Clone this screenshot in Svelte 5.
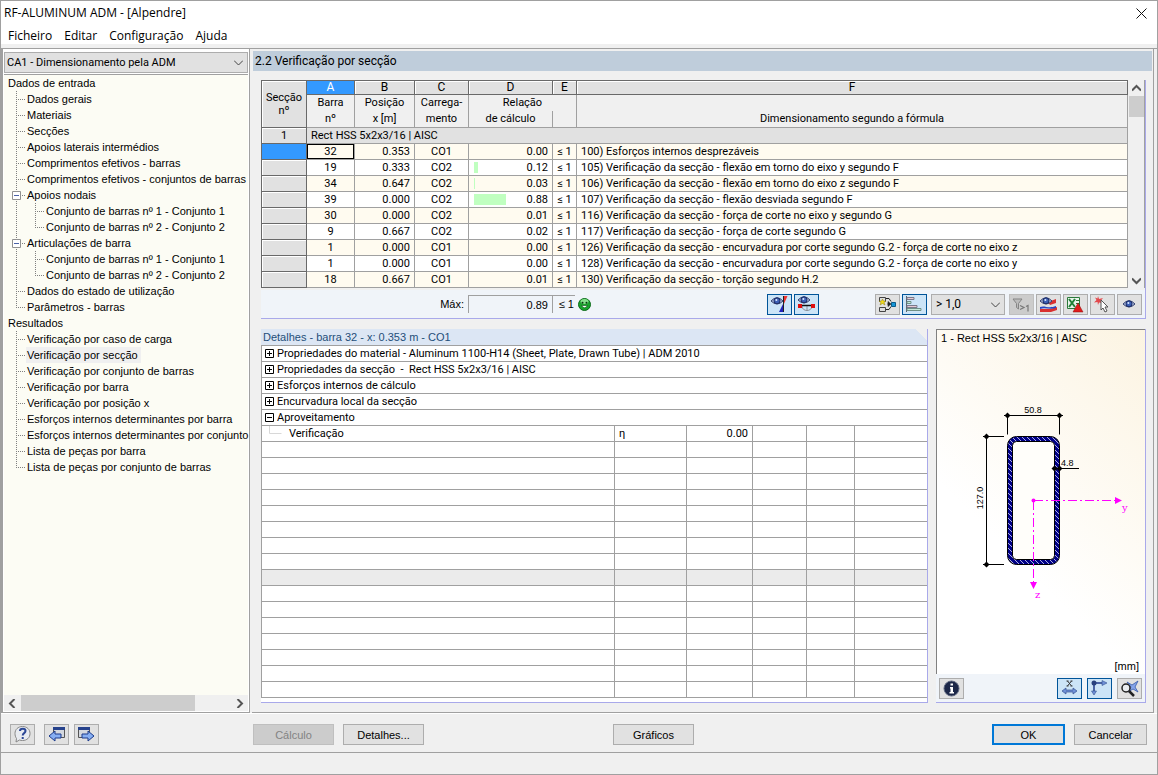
<script lang="ts">
  type TreeNode = { label: string; selected?: boolean; children?: TreeNode[] };

  const tree: TreeNode[] = [
    {
      label: 'Dados de entrada',
      children: [
        { label: 'Dados gerais' },
        { label: 'Materiais' },
        { label: 'Secções' },
        { label: 'Apoios laterais intermédios' },
        { label: 'Comprimentos efetivos - barras' },
        { label: 'Comprimentos efetivos - conjuntos de barras' },
        {
          label: 'Apoios nodais',
          children: [
            { label: 'Conjunto de barras nº 1 - Conjunto 1' },
            { label: 'Conjunto de barras nº 2 - Conjunto 2' }
          ]
        },
        {
          label: 'Articulações de barra',
          children: [
            { label: 'Conjunto de barras nº 1 - Conjunto 1' },
            { label: 'Conjunto de barras nº 2 - Conjunto 2' }
          ]
        },
        { label: 'Dados do estado de utilização' },
        { label: 'Parâmetros - barras' }
      ]
    },
    {
      label: 'Resultados',
      children: [
        { label: 'Verificação por caso de carga' },
        { label: 'Verificação por secção', selected: true },
        { label: 'Verificação por conjunto de barras' },
        { label: 'Verificação por barra' },
        { label: 'Verificação por posição x' },
        { label: 'Esforços internos determinantes por barra' },
        { label: 'Esforços internos determinantes por conjunto' },
        { label: 'Lista de peças por barra' },
        { label: 'Lista de peças por conjunto de barras' }
      ]
    }
  ];

  const rows = [
    { bar: '32', x: '0.353', load: 'CO1', ratio: '0.00', text: '100) Esforços internos desprezáveis' },
    { bar: '19', x: '0.333', load: 'CO2', ratio: '0.12', text: '105) Verificação da secção - flexão em torno do eixo y segundo F' },
    { bar: '34', x: '0.647', load: 'CO2', ratio: '0.03', text: '106) Verificação da secção - flexão em torno do eixo z segundo F' },
    { bar: '39', x: '0.000', load: 'CO2', ratio: '0.88', text: '107) Verificação da secção - flexão desviada segundo F' },
    { bar: '30', x: '0.000', load: 'CO2', ratio: '0.01', text: '116) Verificação da secção - força de corte no eixo y segundo G' },
    { bar: '9', x: '0.667', load: 'CO2', ratio: '0.02', text: '117) Verificação da secção - força de corte segundo G' },
    { bar: '1', x: '0.000', load: 'CO1', ratio: '0.00', text: '126) Verificação da secção - encurvadura por corte segundo G.2 - força de corte no eixo z' },
    { bar: '1', x: '0.000', load: 'CO1', ratio: '0.00', text: '128) Verificação da secção - encurvadura por corte segundo G.2 - força de corte no eixo y' },
    { bar: '18', x: '0.667', load: 'CO1', ratio: '0.01', text: '130) Verificação da secção - torção segundo H.2' }
  ];

  const groups = [
    { label: 'Propriedades do material - Aluminum 1100-H14 (Sheet, Plate, Drawn Tube) | ADM 2010', open: false },
    { label: 'Propriedades da secção \u00a0- \u00a0Rect HSS 5x2x3/16 | AISC', open: false },
    { label: 'Esforços internos de cálculo', open: false },
    { label: 'Encurvadura local da secção', open: false },
    { label: 'Aproveitamento', open: true }
  ];

  const emptyRows = Array.from({ length: 16 }, (_, i) => i);
  const BAR_MAX = 36;

  function barWidth(ratio: string) {
    const value = Number(ratio);
    return value < 0.025 ? 0 : Math.max(1, Math.round(value * BAR_MAX));
  }
</script>

{#snippet eye(x: number, y: number)}
  <g transform="translate({x} {y})">
    <path d="M0 4 Q6 -2.5 12 4 Q6 10 0 4Z" fill="#a9b8dc" stroke="#34406e" />
    <circle cx="6" cy="3.8" r="3" fill="#3c5fb5" stroke="#1c2c66" />
    <circle cx="5.4" cy="3" r="1" fill="#dce8ff" />
  </g>
{/snippet}

{#snippet icon(name: string)}
  <svg class="icon" width="23" height="19" viewBox="0 0 23 19" fill="none" aria-hidden="true">
    {#if name === 'diagram'}
      {@render eye(3, 2)}
      <path d="M15.500 1h4l-4 9z" fill="#ee3333" />
      <path d="M15 9v8h-4z" fill="#2222bb" />
      <path d="M15.500 1v16" stroke="#222" />
    {:else if name === 'member'}
      {@render eye(3, 1)}
      <path d="M7 11c0 6 10 6 10 0M12 11v5" stroke="#8a9099" />
      <path d="M4 10.500h15" stroke="#111" stroke-width="1.500" />
      <path d="M3 9h4v4H3zM16 9h4v4h-4z" fill="#e01010" />
    {:else if name === 'flow'}
      <path d="M3.500 2.500h6v4h-6zM3.500 12.500h6v4h-6z" fill="#ddd" stroke="#444" />
      <path d="M6.500 4l1 2h2.500l-2 1.500 1 2.500-2.500-1.500L4 10l1-2.500L3 6h2.500z" fill="#f2dc1c" stroke="#8b7a10" stroke-width=".5" />
      <path d="M10 3.500h3l2 3M10 14.500h3l2-3" stroke="#222" />
      <path d="M11 9h3M12 6.500l3 2.500-3 2.500z" fill="#222" stroke="#222" stroke-width=".6" />
      <path d="M15.500 7.500h4v4h-4z" fill="#1696d8" stroke="#0b5b8a" />
    {:else if name === 'bars'}
      <path d="M3.500 1v16" stroke="#59636f" />
      <path d="M4 2.500h7v2H4z" fill="#e6c9d2" stroke="#7a7a8a" />
      <path d="M4 6.500h4v2H4z" fill="#c5e8d8" stroke="#6f8f87" />
      <path d="M4 10.500h10v2H4z" fill="#e6c9d2" stroke="#7a7a8a" />
      <path d="M4 13.500h14v2H4z" fill="#c5e8d8" stroke="#6f8f87" />
    {:else if name === 'filter'}
      <path d="M3 4h9l-3.500 4.500V14l-2-1.500v-4z" fill="#bdbdbd" stroke="#858585" />
      <path d="M10 10.500l4 2-4 2M16 11.500l2-1v6" stroke="#777" stroke-width="1.200" />
    {:else if name === 'results'}
      <path d="M11 7l8-3v4l-6 2zM3 14h10l7-2v3l-6 2H3z" fill="#d93030" />
      <path d="M3 12c5-2 8 2 16-1v2c-7 2-11-1-16 1z" fill="#2444c4" />
      {@render eye(3, 2)}
    {:else if name === 'excel'}
      <path d="M3.500 2.500h12v11h-12z" fill="#e8f3ea" stroke="#2b7a3b" />
      <path d="M5 4l6 8M11 4l-6 8" stroke="#218038" stroke-width="2" />
      <path d="M12 5.500h3M12 8.500h3" stroke="#2b7a3b" />
      <path d="M14 8l5 9h-10z" fill="#e01c1c" stroke="#8c0d0d" stroke-width=".5" />
    {:else if name === 'pick'}
      <path d="M7 1l1 3 4-1-2.500 3 2.500 2-4-.5L7 10 6.500 7 3 7.500 5.500 5 4 2.500l2.500 1z" fill="#e2484c" />
      <path d="M10 5l7 7h-3l2 4-2 1-2-4-2 2z" fill="#fff" stroke="#555" />
    {:else if name === 'view'}
      {@render eye(5, 5)}
    {:else if name === 'info'}
      <circle cx="11.500" cy="9.500" r="7.500" fill="#1c2748" stroke="#5f6880" />
      <path d="M10 8h3v5h1v1.500H9.500V13h1V9.500H10zM10.500 4.500h2.500v2h-2.500z" fill="#fff" />
    {:else if name === 'dimx'}
      <path d="M9.500 2l4 5M13.500 2l-4 5M8.500 2h2M12.500 2h2M8.500 7h2M12.500 7h2" stroke="#333" />
      <path d="M4 12l4-3v2h7V9l4 3-4 3v-2H8v2z" fill="#6f90d8" stroke="#34508f" stroke-width=".7" />
    {:else if name === 'axes'}
      <path d="M6 4h10M6 4v10" stroke="#4a64a6" stroke-width="2" />
      <path d="M14 1.500l5 2.500-5 2.500zM3.500 12l2.500 4 2.500-4z" fill="#6f90d8" stroke="#34508f" stroke-width=".6" />
      <circle cx="6" cy="4" r="2.500" fill="#27407e" />
    {:else if name === 'zoomx'}
      <path d="M9 3l5 3 6-4-3 6 3 5-5-3-5 3 3-5z" fill="#86a5ea" stroke="#3659a8" stroke-width=".8" />
      <circle cx="8" cy="9" r="4" fill="#eef2f6" fill-opacity=".7" stroke="#222" stroke-width="1.500" />
      <path d="M11 12l5 5" stroke="#222" stroke-width="2.500" />
    {:else if name === 'help'}
      <path d="M11.500 1.500c4.500 0 7.500 3 7.500 7s-3 7-7.500 7c-1 0-2-.2-3-.5L5 17l.5-3.500C4.500 12 4 10.500 4 8.500c0-4 3-7 7.500-7z" fill="#e8ebf0" stroke="#888" />
      <path d="M9 6c0-3 5.500-3 5.500 0 0 2.200-2.800 2-2.800 4.500M11.700 12v2" stroke="#2b4796" stroke-width="2" />
    {:else if name === 'previous'}
      <path d="M8.500 2.500h11v10h-11z" fill="#d4d8df" stroke="#555" />
      <path d="M8 2h12v3H8z" fill="#26428c" />
      <path d="M4 11l6-5v3h6v4h-6v3z" fill="#86aef2" stroke="#1c3a8c" />
    {:else if name === 'next'}
      <path d="M3.500 2.500h11v10h-11z" fill="#d4d8df" stroke="#555" />
      <path d="M3 2h12v3H3z" fill="#26428c" />
      <path d="M19 11l-6-5v3H7v4h6v3z" fill="#86aef2" stroke="#1c3a8c" />
    {/if}
  </svg>
{/snippet}

{#snippet tool(name: string, label: string, state: string = '')}
  <button class="tool {state}" type="button" aria-label={label} disabled={state === 'off'}>
    {@render icon(name)}
  </button>
{/snippet}

{#snippet chevron(dir: string)}
  <svg class="chevron {dir}" width="9" height="9" viewBox="0 0 9 9" fill="none" aria-hidden="true">
    <path d="M0 2.500l4.500 4.500L9 2.500" stroke="currentColor" />
  </svg>
{/snippet}

{#snippet guide(kind: string)}
  <svg class="guide" width="19" height="16" viewBox="0 0 19 16" fill="none" aria-hidden="true">
    <path d={kind === 'last' ? 'M9.500 0v9' : 'M9.500 0v16'} stroke="#808080" stroke-dasharray="1 1" />
    {#if kind !== 'pass'}
      <path d="M9 8.500h9" stroke="#808080" stroke-dasharray="1 1" />
    {/if}
    {#if kind === 'toggle'}
      <path d="M5.500 4.500h8v8h-8z" fill="#fff" stroke="#919191" />
      <path d="M7 8.500h5" stroke="#4b63a7" />
    {/if}
  </svg>
{/snippet}

<div class="window">
  <header>
    <div class="titlebar">
      <h1>RF-ALUMINUM ADM - [Alpendre]</h1>
      <button class="close" type="button" aria-label="Fechar">
        <svg width="11" height="11" viewBox="0 0 11 11" aria-hidden="true">
          <path d="M.5.5l10 10M10.500.5l-10 10" stroke="#111" />
        </svg>
      </button>
    </div>
    <nav class="menu">
      <button type="button">Ficheiro</button>
      <button type="button">Editar</button>
      <button type="button">Configuração</button>
      <button type="button">Ajuda</button>
    </nav>
  </header>

  <main>
    <aside>
      <div class="combo case">
        <select aria-label="Caso">
          <option>CA1 - Dimensionamento pela ADM</option>
        </select>
        {@render chevron('down')}
      </div>
      <ul class="tree">
        {#each tree as root}
          <li>
            <a class="row root" href="#tree">{root.label}</a>
            <ul>
              {#each root.children ?? [] as node, i}
                {@const last = i === (root.children?.length ?? 0) - 1}
                <li>
                  <a class="row" href="#tree">
                    {@render guide(node.children ? 'toggle' : last ? 'last' : 'mid')}
                    <span class:selected={node.selected}>{node.label}</span>
                  </a>
                  {#if node.children}
                    <ul>
                      {#each node.children as child, j}
                        <li>
                          <a class="row" href="#tree">
                            {@render guide('pass')}
                            {@render guide(j === node.children.length - 1 ? 'last' : 'mid')}
                            <span>{child.label}</span>
                          </a>
                        </li>
                      {/each}
                    </ul>
                  {/if}
                </li>
              {/each}
            </ul>
          </li>
        {/each}
      </ul>
      <div class="hscroll">
        <button type="button" aria-label="Esquerda">{@render chevron('left')}</button>
        <div class="track"><div class="thumb"></div></div>
        <button type="button" aria-label="Direita">{@render chevron('right')}</button>
      </div>
    </aside>

    <section class="content">
      <h2>2.2 Verificação por secção</h2>

      <div class="panel results">
        <div class="grid-wrap">
          <table class="grid">
            <colgroup>
              <col class="c-section" /><col class="c-a" /><col class="c-b" /><col class="c-c" />
              <col class="c-d" /><col class="c-e" /><col />
            </colgroup>
            <thead>
              <tr class="letters">
                <th class="corner" rowspan="3">Secção<br />nº</th>
                <th class="active">A</th>
                <th>B</th>
                <th>C</th>
                <th>D</th>
                <th>E</th>
                <th>F</th>
              </tr>
              <tr class="names">
                <th>Barra</th>
                <th>Posição</th>
                <th>Carrega-</th>
                <th colspan="2">Relação</th>
                <th></th>
              </tr>
              <tr class="names bottom">
                <th>nº</th>
                <th>x [m]</th>
                <th>mento</th>
                <th>de cálculo</th>
                <th></th>
                <th>Dimensionamento segundo a fórmula</th>
              </tr>
            </thead>
            <tbody>
              <tr class="section">
                <th scope="row">1</th>
                <td colspan="6">Rect HSS 5x2x3/16 | AISC</td>
              </tr>
              {#each rows as row, i}
                <tr class:tinted={i % 2 === 0}>
                  <th scope="row" class:active={i === 0} aria-label="Linha {i + 1}"></th>
                  <td class="center" class:focus={i === 0}>{row.bar}</td>
                  <td class="number">{row.x}</td>
                  <td class="center">{row.load}</td>
                  <td class="ratio">
                    <div>
                      <span class="bar" style="width: {barWidth(row.ratio)}px"></span>
                      {row.ratio}
                    </div>
                  </td>
                  <td class="limit">≤ 1</td>
                  <td class="text">{row.text}</td>
                </tr>
              {/each}
            </tbody>
          </table>
          <div class="vscroll">
            <button type="button" aria-label="Acima">{@render chevron('up')}</button>
            <div class="track"><div class="thumb"></div></div>
            <button type="button" aria-label="Abaixo">{@render chevron('down')}</button>
          </div>
        </div>

        <div class="toolbar">
          <label for="max-ratio">Máx:</label>
          <input id="max-ratio" class="max" value="0.89" readonly />
          <span class="max-limit">≤ 1</span>
          <svg width="13" height="13" viewBox="0 0 13 13" role="img" aria-label="Cumprido">
            <circle cx="6.500" cy="6.500" r="6" fill="#17a32a" stroke="#0a6a18" />
            <ellipse cx="6.500" cy="3.500" rx="4" ry="2.500" fill="#86e08c" />
            <path d="M3.500 7.500q3 4.500 6 0z" fill="#fff" stroke="#064d10" stroke-width=".6" />
            <circle cx="4.500" cy="4.800" r="1" fill="#053a0c" />
            <circle cx="8.500" cy="4.800" r="1" fill="#053a0c" />
          </svg>
          <div class="tools first">
            {@render tool('diagram', 'Diagramas', 'on')}
            {@render tool('member', 'Barra no modelo', 'on')}
          </div>
          <div class="tools">
            {@render tool('flow', 'Casos determinantes')}
            {@render tool('bars', 'Barras de relação', 'on')}
          </div>
          <div class="combo filter">
            <select aria-label="Filtro">
              <option>&gt; 1,0</option>
            </select>
            {@render chevron('down')}
          </div>
          <div class="tools">
            {@render tool('filter', 'Filtrar maiores que 1', 'off')}
            {@render tool('results', 'Resultados')}
            {@render tool('excel', 'Exportar')}
            {@render tool('pick', 'Selecionar')}
            {@render tool('view', 'Ver')}
          </div>
        </div>
      </div>

      <div class="lower">
        <div class="panel details">
          <h3>Detalhes - barra 32 - x: 0.353 m - CO1</h3>
          <table class="detail-grid">
            <colgroup>
              <col /><col class="d-symbol" /><col class="d-value" /><col class="d-unit" />
              <col class="d-small" /><col class="d-last" />
            </colgroup>
            <tbody>
              {#each groups as group}
                <tr>
                  <td class="group" colspan="6">
                    <div>
                      <button type="button" aria-label="Expandir" aria-expanded={group.open}>
                        <svg width="9" height="9" viewBox="0 0 9 9" aria-hidden="true">
                          <path d="M.5.5h8v8h-8zM2 4.500h5" fill="none" stroke="#000" />
                          {#if !group.open}
                            <path d="M4.500 2v5" stroke="#000" />
                          {/if}
                        </svg>
                      </button>
                      {group.label}
                    </div>
                  </td>
                </tr>
              {/each}
              <tr>
                <td class="group">
                  <div>
                    <svg width="21" height="15" viewBox="0 0 21 15" fill="none" aria-hidden="true">
                      <path d="M4.500 0v7.500h12" stroke="#d8d8d8" />
                    </svg>
                    Verificação
                  </div>
                </td>
                <td class="symbol">η</td>
                <td class="number">0.00</td>
                <td></td>
                <td></td>
                <td></td>
              </tr>
              {#each emptyRows as i}
                <tr class:shaded={i === 8}>
                  <td></td>
                  <td></td>
                  <td></td>
                  <td></td>
                  <td></td>
                  <td></td>
                </tr>
              {/each}
            </tbody>
          </table>
        </div>

        <div class="panel drawing">
          <div class="canvas">
            <h3>1 - Rect HSS 5x2x3/16 | AISC</h3>
            <svg width="208" height="240" viewBox="0 0 208 240" fill="none" role="img" aria-label="Secção">
              <defs>
                <pattern id="hatch" width="5" height="5" patternUnits="userSpaceOnUse">
                  <rect width="5" height="5" fill="#000087" />
                  <path d="M-1 -1l7 7M-1 4l2 2M4 -1l2 2" stroke="#c0c0ea" stroke-width=".9" />
                </pattern>
              </defs>
              <rect x="70.500" y="54.500" width="52" height="128" rx="9" fill="url(#hatch)" stroke="#000" />
              <rect x="75.500" y="59.500" width="42" height="118" rx="4" fill="#fffefa" stroke="#000" />
              <g stroke="#000">
                <path d="M67 33.500h59M70.500 33.500v19M122.500 33.500v19" />
                <path d="M49.500 52v133M46 54.500h21M46 182.500h21" />
                <path d="M115 86.500h27" />
              </g>
              <g fill="#000">
                <path d="M67.500 33.500l3-3 3 3-3 3zM119.500 33.500l3-3 3 3-3 3z" />
                <path d="M46.500 54.500l3-3 3 3-3 3zM46.500 182.500l3-3 3 3-3 3z" />
                <path d="M114.500 86.500l3-3 3 3-3 3zM119.500 86.500l3-3 3 3-3 3z" />
              </g>
              <g class="dims">
                <text x="96" y="31" text-anchor="middle">50.8</text>
                <text x="124" y="84">4.8</text>
                <text x="46" y="116" text-anchor="middle" transform="rotate(-90 46 116)">127.0</text>
              </g>
              <path d="M97 118.500h83M96.500 119v81" stroke="#f0f" stroke-dasharray="9 3 2 3" />
              <path d="M178 115l7 3.500-7 3.500zM93 200l3.500 7 3.500-7z" fill="#f0f" />
              <circle cx="96.500" cy="118.500" r="2" fill="#f0f" />
              <g class="axis">
                <text x="185" y="129">y</text>
                <text x="98" y="216">z</text>
              </g>
            </svg>
            <span class="unit">[mm]</span>
          </div>
          <div class="toolbar">
            {@render tool('info', 'Informação')}
            <div class="tools spaced">
              {@render tool('dimx', 'Dimensões', 'on')}
              {@render tool('axes', 'Eixos', 'on')}
              {@render tool('zoomx', 'Ver tudo')}
            </div>
          </div>
        </div>
      </div>
    </section>
  </main>

  <footer>
    {@render tool('help', 'Ajuda')}
    <div class="tools spaced pages">
      {@render tool('previous', 'Anterior')}
      {@render tool('next', 'Seguinte')}
    </div>
    <div class="actions">
      <button class="action" type="button" disabled>Cálculo</button>
      <button class="action" type="button">Detalhes...</button>
      <button class="action graphics" type="button">Gráficos</button>
      <button class="action short default" type="button">OK</button>
      <button class="action short" type="button">Cancelar</button>
    </div>
  </footer>
  <div class="status"></div>
</div>

<style>
  :global(body) {
    margin: 0;
    background: #fff;
  }

  * {
    box-sizing: border-box;
  }

  .window {
    display: flex;
    flex-direction: column;
    min-height: 100vh;
    border: 1px solid #a0a0a0;
    background: #f0f0f0;
    color: #000;
    font-family: 'Liberation Sans', Arial, sans-serif;
    font-size: 11px;
    line-height: 16px;
  }

  button,
  input,
  select {
    margin: 0;
    padding: 0;
    border: 0;
    background: none;
    color: inherit;
    font: inherit;
  }

  h1,
  h2,
  h3 {
    margin: 0;
    font-weight: 400;
  }

  ul {
    margin: 0;
    padding: 0;
    list-style: none;
  }

  svg {
    display: block;
    flex: none;
  }

  /* title and menu */
  header {
    padding-bottom: 4px;
    border-bottom: 1px solid #a0a0a0;
    background: linear-gradient(#fff, #fff) no-repeat 0 0 / 100% 43px;
    font-family: 'Open Sans', 'Noto Sans', sans-serif;
    font-size: 12px;
  }

  .titlebar {
    display: flex;
    align-items: center;
    justify-content: space-between;
    height: 24px;
    padding: 0 10px 0 3px;
  }

  h1 {
    font-size: 12px;
  }

  .menu {
    display: flex;
    gap: 12px;
    height: 19px;
    padding-left: 7px;
  }

  .menu button {
    height: 22px;
  }

  main {
    display: flex;
    flex: 1;
  }

  /* navigation */
  aside {
    display: flex;
    flex-direction: column;
    width: 249px;
    padding: 3px 1px 1px;
    border: solid #a0a0a0;
    border-width: 0 1px 1px 2px;
    background: #fff;
  }

  .combo {
    display: grid;
    align-items: center;
    border: 1px solid #adadad;
    background: #e1e1e1;
    color: #444;
    font-family: Roboto, 'Liberation Sans', sans-serif;
  }

  .combo select {
    grid-area: 1 / 1;
    width: 100%;
    height: 100%;
    appearance: none;
    color: #000;
  }

  .combo .chevron {
    grid-area: 1 / 1;
    justify-self: end;
    margin-right: 4px;
    pointer-events: none;
  }

  .case {
    height: 21px;
  }

  .case select {
    padding-left: 2px;
  }

  .tree {
    flex: 1;
    margin-top: 1px;
    border-top: 1px solid #a0a0a0;
    background: #fcfcf4;
  }

  .row {
    display: flex;
    height: 16px;
    padding-left: 3px;
    color: #000;
    text-decoration: none;
    white-space: nowrap;
  }

  .row span {
    padding: 0 3px 0 1px;
  }

  .row .selected {
    background: #f0f0f0;
  }

  .root {
    padding-left: 4px;
  }

  .chevron.up {
    transform: rotate(180deg);
  }

  .chevron.left {
    transform: rotate(90deg);
  }

  .chevron.right {
    transform: rotate(-90deg);
  }

  .hscroll,
  .vscroll {
    display: flex;
    background: #f0f0f0;
    color: #555;
  }

  .hscroll button,
  .vscroll button {
    display: grid;
    place-items: center;
    width: 17px;
    height: 16px;
  }

  .hscroll path,
  .vscroll path {
    stroke-width: 2;
  }

  .track {
    flex: 1;
  }

  .thumb {
    background: #cdcdcd;
  }

  .hscroll .thumb {
    width: 83%;
    height: 16px;
  }

  /* results */
  .content {
    display: flex;
    flex: 1;
    flex-direction: column;
    min-width: 0;
    margin: 0 3px 0 2px;
    padding: 2px 1px 9px 1px;
    border: solid #a0a0a0;
    border-width: 0 1px 1px 0;
  }

  h2 {
    height: 20px;
    padding-left: 2px;
    background: #bfcddb;
    font-family: Roboto, 'Liberation Sans', sans-serif;
    font-size: 12px;
    line-height: 20px;
  }

  .panel {
    border-right: 1px solid #a9a9ea;
    border-bottom: 1px solid #a9a9ea;
  }

  .results {
    margin: 9px 6px 0 8px;
  }

  .grid-wrap {
    display: flex;
  }

  table {
    width: 100%;
    border-spacing: 0;
    table-layout: fixed;
    font-family: Roboto, 'Liberation Sans', sans-serif;
    line-height: 15px;
  }

  th,
  td {
    height: 16px;
    padding: 0;
    border: solid #a0a0a0;
    border-width: 0 1px 1px 0;
    font-weight: 400;
    white-space: nowrap;
    overflow: hidden;
  }

  .grid {
    flex: 1;
    width: 0;
    border: solid #696969;
    border-width: 1px 0 0 1px;
  }

  .c-section {
    width: 45px;
  }

  .c-a {
    width: 48px;
  }

  .c-b {
    width: 60px;
  }

  .c-c {
    width: 54px;
  }

  .c-d {
    width: 84px;
  }

  .c-e {
    width: 24px;
  }

  .letters th {
    height: 14px;
    border-color: #696969;
    background: #e1e1e1;
    box-shadow: inset 1px 1px #fff;
    font-size: 12px;
    line-height: 13px;
  }

  .letters .corner {
    height: auto;
    font-size: 11px;
    line-height: 13px;
  }

  th.active,
  .letters .active {
    background: #3399ff;
    box-shadow: none;
    color: #fff;
  }

  .names th {
    border-bottom: 0;
    background: #f0f0f0;
    line-height: 16px;
  }

  .names.bottom th {
    height: 17px;
    border-bottom: 1px solid #a0a0a0;
  }

  tbody th {
    border-color: #696969;
    background: #e1e1e1;
    box-shadow: inset 1px 1px #fff;
  }

  .section td {
    padding-left: 4px;
    background: #e1e1e1;
  }

  tbody td {
    background: #fff;
  }

  .tinted td {
    background: #fffbf0;
  }

  .center,
  .limit {
    text-align: center;
  }

  .focus {
    box-shadow: inset 1px 1px #000, inset -1px -1px #000;
  }

  .number {
    padding-right: 4px;
    text-align: right;
  }

  .ratio div {
    display: flex;
    align-items: center;
    justify-content: space-between;
    padding: 0 4px 0 5px;
  }

  .bar {
    height: 11px;
    background: #c0ffc0;
  }

  .text {
    padding-left: 4px;
  }

  .vscroll {
    flex-direction: column;
    width: 17px;
    border-right: 1px solid #a0a0a0;
  }

  .vscroll .thumb {
    width: 15px;
    height: 21px;
    margin-left: 1px;
  }

  .toolbar {
    display: flex;
    align-items: center;
    height: 28px;
    background: #f0f4f9;
  }

  .results .toolbar {
    margin-top: 2px;
    padding-right: 3px;
  }

  .toolbar label {
    width: 207px;
    padding-right: 4px;
    text-align: right;
  }

  .max,
  .max-limit {
    height: 18px;
    border: solid #a0a0a0;
    border-width: 1px 0 0 1px;
    line-height: 17px;
    text-align: right;
  }

  .max {
    width: 84px;
    padding-right: 4px;
  }

  .max-limit {
    width: 23px;
    margin-right: 3px;
    padding-right: 1px;
  }

  .tools {
    display: flex;
    gap: 2px;
  }

  .spaced {
    gap: 5px;
  }

  .first {
    margin: 0 56px 0 auto;
  }

  .tool {
    display: grid;
    place-items: center;
    width: 25px;
    height: 21px;
    border: 1px solid #adadad;
    background: #e1e1e1;
  }

  .tool.on {
    border-color: #005499;
    background: #cce4f7;
  }

  .tool.off {
    border-color: #bfbfbf;
    background: #ccc;
  }

  .filter {
    width: 74px;
    height: 21px;
    margin: 0 4px;
    font-size: 12px;
  }

  .filter select {
    padding-left: 4px;
  }

  /* details and drawing */
  .lower {
    display: flex;
    flex: 1;
    gap: 8px;
    margin: 10px 6px 0 8px;
  }

  .details {
    flex: 1;
    min-width: 0;
    background: #fff;
  }

  .details h3 {
    height: 16px;
    padding-left: 2px;
    background: linear-gradient(225deg, #f0f0f0 8px, #dce6f4 8px);
    color: #1f4e79;
    font-size: 11px;
  }

  .detail-grid {
    border: solid #a0a0a0;
    border-width: 1px 0 0 1px;
  }

  .detail-grid td:last-child {
    border-right: 0;
  }

  .d-symbol {
    width: 72px;
  }

  .d-value {
    width: 66px;
  }

  .d-unit {
    width: 54px;
  }

  .d-small {
    width: 48px;
  }

  .d-last {
    width: 72px;
  }

  .group div {
    display: flex;
    align-items: center;
    gap: 3px;
    height: 15px;
    padding-left: 3px;
  }

  .symbol {
    padding-left: 4px;
  }

  .shaded td {
    background: #ebebeb;
  }

  .drawing {
    display: flex;
    flex-direction: column;
    width: 210px;
  }

  .canvas {
    display: flex;
    flex: 1;
    flex-direction: column;
    justify-content: space-between;
    border: solid #808080;
    border-width: 1px 0 0 1px;
    background: linear-gradient(45deg, #fff 35%, #fcf4e2);
  }

  .canvas h3 {
    padding-left: 4px;
    font-size: 11px;
  }

  .dims {
    fill: #000;
    font-size: 9px;
  }

  .axis {
    fill: #f0f;
    font-family: 'DejaVu Serif', serif;
    font-size: 10px;
  }

  .unit {
    padding-right: 6px;
    text-align: right;
  }

  .drawing .toolbar {
    justify-content: space-between;
    padding: 0 3px;
  }

  /* buttons */
  footer {
    display: flex;
    align-items: center;
    padding: 10px 10px 7px 9px;
    border-top: 1px solid #fff;
  }

  .pages {
    width: 218px;
    padding-left: 9px;
  }

  .actions {
    display: flex;
    flex: 1;
    gap: 9px;
  }

  .action {
    width: 81px;
    height: 21px;
    border: 1px solid #adadad;
    background: #e1e1e1;
  }

  .action:disabled {
    border-color: #bfbfbf;
    background: #ccc;
    color: #838383;
  }

  .graphics {
    margin: 0 auto 0 180px;
  }

  .short {
    width: 73px;
  }

  .default {
    border: 2px solid #0078d7;
  }

  .status {
    height: 22px;
    border-top: 1px solid #a0a0a0;
  }
</style>
